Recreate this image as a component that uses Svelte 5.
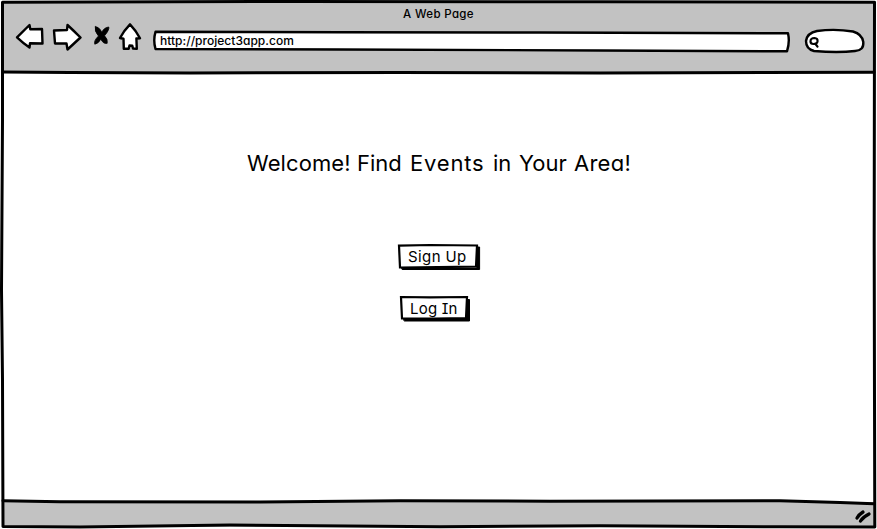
<script>
  const url = 'http://project3app.com';
  const actions = [
    { label: 'Sign Up', kind: 'signup', face: 'M9 11.6 L40 11 L87 11.5 L86 32.5 L48 33.2 L10 33.5 Z', shade: 'M12 34 H87 V13 L89.6 13 V35.5 H12.5 Z' },
    { label: 'Log In', kind: 'login', face: 'M11 63 L40 63.4 L77 63 L76 84 L45 84.5 L12 84.5 Z', shade: 'M14 85 H77 V65.5 L79.5 65.5 V87 H14.5 Z' }
  ];
</script>

<div class="browser">
  <header>
    <div class="caption"><span>A Web Page</span></div>
    <nav>
      <svg class="back" width="30" height="30" viewBox="15 22 30 30"><path d="M17 37.3 L29.5 25 L30.3 29.3 L42 29 L42.5 43.5 L30 43.3 L29.5 47.5 Q23 43 17 37.3 Z" /></svg>
      <svg class="next" width="31" height="30" viewBox="51 22 31 30"><path d="M54 30.5 L67 30 L67.5 25 Q74 31 80.5 37.5 L67.5 49.5 L66.5 43.5 L55 43.5 Z" /></svg>
      <svg class="stop" width="20" height="24" viewBox="92 24 20 24"><path d="M95.3 26.8 Q99 26.5 101.8 32.3 Q104 27.5 108.8 27 Q109.5 30 104.5 35.8 Q108 39 107.2 43.3 Q103.5 44.3 100.8 39.2 Q98.5 43.5 94.8 44.2 Q93.5 40.8 98.5 36 Q94 31 95.3 26.8 Z" /></svg>
      <svg class="home" width="25" height="30" viewBox="118 22 25 30"><path d="M130 24.3 Q136 30.5 140 38.2 L136.4 38.5 L136.8 48.7 L133 48.5 L132.3 45.8 L129.5 45.5 L128.7 48.7 L123.8 48.8 L123.5 38.7 L120 38 Q123.5 31 130 24.3 Z" /></svg>
      <div class="address">
        <svg width="640" height="26" viewBox="152 28 640 26"><path d="M155.5 31.8 L340 32.3 L540 32.5 L788 33.3 Q790 42 787 51.3 L600 50.5 L340 49.5 L155.5 49 Q153 40 155.5 31.8 Z" /></svg>
        <span>{url}</span>
      </div>
      <svg class="search" width="62" height="30" viewBox="804 26 62 30">
        <path d="M806 41 Q807 33 817 31 Q835 28.5 853 31.5 Q862 34 863.3 42 Q864 50.5 855 51 Q838 53 814 51 Q806 49 806 41 Z" />
        <path class="lens" d="M810.5 41.5 Q810.5 38 814.5 38 Q818 38.3 817.5 41.5 Q817 44 813.5 44 Q810.5 44 810.5 41.5 M815.5 44 L817.5 46.7" />
      </svg>
    </nav>
  </header>

  <main>
    <h1>
      <span class="welcome">Welcome!</span><span class="find">Find</span><span class="events">Events</span><span class="in">in</span><span class="your">Your</span><span class="area">Area!</span>
    </h1>
    {#each actions as action, i}
      <button class={action.kind}>
        <svg width="90" height="32" viewBox={i === 0 ? '4 6 90 32' : '4 58 90 32'}>
          <path class="shade" d={action.shade} />
          <path class="face" d={action.face} />
        </svg>
        <span>{action.label}</span>
      </button>
    {/each}
  </main>

  <footer>
    <svg width="22" height="18" viewBox="852 508 22 18"><path d="M857 518 Q859 514.5 863 512 M860.5 521 Q863 517 869 514" /></svg>
  </footer>

  <svg class="frame" width="877" height="529" viewBox="0 0 877 529">
    <path class="outside" fill-rule="evenodd" d="M0 0 H877 V529 H0 Z M2 2 H875 V527 H2 Z" />
    <path d="M2.5 2.3 L300 1.5 L600 1.7 L874.5 2.2 L874.2 240 L874.5 400 L874.8 527 L780 526.8 L600 525.7 L440 526.7 L230 525 L80 527 L3 526.5 L2.5 380 L1.5 290 L2.5 120 Z" />
    <path d="M3 72 L70 72.6 L190 73 L400 72.5 L600 73 L874 72.3" />
    <path d="M3 500.8 L60 501.7 L260 502 L400 500.8 L550 501.2 L780 500.7 L840 502.5 L874 503.8" />
  </svg>
</div>

<style>
  :global(body) { margin: 0; overflow: hidden; }
  .browser {
    position: relative;
    display: flex;
    flex-direction: column;
    width: 877px;
    height: 529px;
    box-sizing: border-box;
    background: #fff;
    color: #000;
    font-family: Inter, Lato, sans-serif;
    font-feature-settings: 'cv11' 1;
  }
  header { height: 73px; background: #c2c2c2; }
  .caption { height: 22px; padding-top: 6px; box-sizing: border-box; text-align: center; font-size: 11.5px; font-weight: 500; line-height: 16px; letter-spacing: 0.35px; }
  nav { display: flex; height: 30px; padding-left: 15px; }
  svg { display: block; fill: #fff; stroke: #000; stroke-width: 2.4; stroke-linejoin: round; stroke-linecap: round; flex: none; }
  .next { margin-left: 6px; }
  .stop { margin: 2px 0 0 10px; stroke-width: 0.8; fill: #000; }
  .home { margin-left: 6px; }
  .address { display: grid; margin: 6px 0 0 9px; width: 640px; height: 26px; }
  .address svg, .address span { grid-area: 1 / 1; }
  .address span { padding: 5px 0 0 8px; font-size: 12px; font-weight: 500; line-height: 16px; letter-spacing: 0.02px; }
  .search { margin: 4px 0 0 12px; }
  .lens { fill: none; stroke-width: 2.2; }
  main { flex: 1; display: flex; flex-direction: column; }
  h1 { display: flex; margin: 74px 0 0 247px; font-size: 22px; font-weight: 400; line-height: 32px; white-space: nowrap; }
  .welcome { width: 110px; letter-spacing: 0.1px; }
  .find { width: 53px; }
  .events { width: 83px; letter-spacing: 0.8px; }
  .in { width: 26px; }
  .your { width: 55px; }
  .area { letter-spacing: 0.25px; }
  button { display: grid; width: 90px; height: 32px; margin: 61px 0 0 394px; padding: 0; border: 0; background: none; color: inherit; font: inherit; font-feature-settings: 'cv11' 1, 'cv08' 1; }
  button svg, button span { grid-area: 1 / 1; }
  button span { padding: 7px 0 0 14px; text-align: left; font-size: 15px; line-height: 20px; letter-spacing: 0.4px; white-space: nowrap; }
  .login { margin-top: 20px; }
  .login span { padding-left: 16px; letter-spacing: 0.2px; }
  .shade { fill: #000; stroke-width: 1; stroke-linejoin: miter; }
  .face { stroke-width: 2.2; stroke-linejoin: miter; }
  footer { display: flex; justify-content: flex-end; height: 27px; padding: 6px 3px 0 0; box-sizing: border-box; background: #c2c2c2; }
  footer svg { fill: none; stroke-width: 3.3; }
  .frame { position: absolute; inset: 0; fill: none; stroke-width: 3; pointer-events: none; }
  .outside { fill: #fff; stroke: none; }
</style>
